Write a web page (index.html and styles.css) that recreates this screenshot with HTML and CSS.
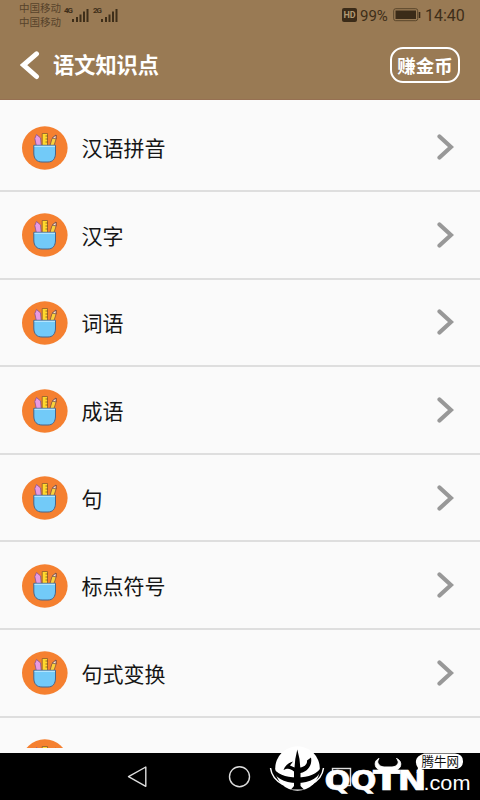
FILE: index.html
```html
<!DOCTYPE html>
<html lang="zh-CN">
<head>
<meta charset="utf-8">
<title>语文知识点</title>
<link rel="stylesheet" href="styles.css">
</head>
<body>
<svg width="0" height="0" class="defs">
  <symbol id="pencils" viewBox="0 0 46 44">
    <ellipse cx="22.8" cy="22" rx="22.8" ry="21.7" fill="#f58030"/>
    <path d="M15 23 12.800 12.500 14.500 8.500 18.600 12 19.500 23Z" fill="#e99be0" stroke="#80539a" stroke-width=".8"/>
    <path d="M27 23 30 12.500 34 9 34 13.500 30.800 23Z" fill="#fbd23c" stroke="#805044" stroke-width=".8"/>
    <path d="M30.300 12 34 9V13Z" fill="#ffe3d3" stroke="#603c43" stroke-width=".7"/>
    <path d="M20.200 7.500H25.500V23H20.200Z" fill="#ffd82d" stroke="#8c5930" stroke-width=".8"/>
    <path d="M23.500 10H26M23.500 13H26M23.500 16H26" stroke="#805020" stroke-width=".8"/>
    <path d="M11.800 19.300H33.500V27C33.500 33 30.500 36 26 36H20C15 36 11.800 33 11.800 27Z" fill="#72caf8" stroke="#46658c"/>
    <path d="M12.500 20.300H33" stroke="#b9e8ff" stroke-width="1.200"/>
  </symbol>
  <symbol id="next" viewBox="0 0 18 28">
    <path d="M3.500 3.500 15 14 3.500 24.500" fill="none" stroke="#989898" stroke-width="4.200" stroke-linecap="round"/>
  </symbol>
  <symbol id="signal" viewBox="0 0 17 15">
    <path d="M1 14V11M5 14V9M8.500 14V6.500M12 14V3.500M15.500 14V1" stroke="#3e2e19" stroke-width="2"/>
  </symbol>
</svg>
<div class="screen">
  <header class="header">
    <div class="status">
      <div class="carriers"><span>中国移动</span><span>中国移动</span></div>
      <span class="net">4G</span><svg class="signal"><use href="#signal"/></svg>
      <span class="net second">2G</span><svg class="signal"><use href="#signal"/></svg>
      <span class="hd">HD</span>
      <span class="percent">99%</span>
      <svg class="battery" width="28" height="14" viewBox="0 0 28 14"><rect x=".7" y=".7" width="24" height="12" rx="2" fill="none" stroke="#59452a"/><rect x="2.5" y="2.5" width="20.5" height="8.5" fill="#3b2b18"/><path d="M26.500 4V10" stroke="#3b2b18" stroke-width="1.600"/></svg>
      <span class="time">14:40</span>
    </div>
    <div class="titlebar">
      <svg class="back" width="20" height="30" viewBox="0 0 20 30"><path d="M16.500 3.800 3.500 15 16.500 26.500" fill="none" stroke="#fff" stroke-width="5" stroke-linecap="round"/></svg>
      <h1>语文知识点</h1>
      <button class="coins">赚金币</button>
    </div>
  </header>
  <main class="list">
    <div class="row"><svg class="icon"><use href="#pencils"/></svg><span>汉语拼音</span><svg class="next"><use href="#next"/></svg></div>
    <div class="row"><svg class="icon"><use href="#pencils"/></svg><span>汉字</span><svg class="next"><use href="#next"/></svg></div>
    <div class="row"><svg class="icon"><use href="#pencils"/></svg><span>词语</span><svg class="next"><use href="#next"/></svg></div>
    <div class="row"><svg class="icon"><use href="#pencils"/></svg><span>成语</span><svg class="next"><use href="#next"/></svg></div>
    <div class="row"><svg class="icon"><use href="#pencils"/></svg><span>句</span><svg class="next"><use href="#next"/></svg></div>
    <div class="row"><svg class="icon"><use href="#pencils"/></svg><span>标点符号</span><svg class="next"><use href="#next"/></svg></div>
    <div class="row"><svg class="icon"><use href="#pencils"/></svg><span>句式变换</span><svg class="next"><use href="#next"/></svg></div>
    <div class="row"><svg class="icon"><use href="#pencils"/></svg></div>
  </main>
  <nav class="nav">
    <svg width="480" height="47" viewBox="0 0 480 47" fill="none" stroke="#dedede" stroke-width="1.4">
      <path d="M145.800 14V33.300L128.500 23.700Z" stroke-linejoin="round"/>
      <circle cx="239.5" cy="23.7" r="10"/>
      <rect x="332.5" y="15.5" width="18" height="17"/>
    </svg>
  </nav>
  <svg class="watermark" width="220" height="60" viewBox="260 740 220 60">
    <circle cx="297.5" cy="768.5" r="22.3" fill="#fff"/>
    <path d="M271.500 766C277 774 285 777.500 297 777.500S317 774 322.500 766C320 778 310 783 297 783S274 778 271.500 766Z" fill="#000"/>
    <path d="M270.500 768C271.500 776 276 781 283 784.500M323.500 768C322.500 776 318 781 311 784.500" fill="none" stroke="#fff" stroke-width="1.500"/>
    <path d="M297.300 749.500 299.500 759 300.300 767.500C304.500 767 307.500 764 307 760.500L311 757.500C312.500 765 308 771.500 300.500 773V786L304 789.500H291L294 786V771.500C290 768.500 288 768 283.500 770C285 765.500 289 762.500 293 761.500L290 765.500 294.500 767.500 295.300 759Z" fill="#000"/>
    <path d="M379 758.500C376 762 378.500 766.500 384 767H392C398 766.500 400 762 396.500 758.500C402 760.500 402 767 397.500 769.500Q395 771.500 391 771.500H385Q381 771.500 378.500 769.500C374 767 374 760.500 379 758.500Z" fill="#fff" stroke="#fff"/>
    <text class="brand" y="790.3"><tspan x="324.5" textLength="52" lengthAdjust="spacingAndGlyphs">QQ</tspan><tspan x="373" textLength="27" lengthAdjust="spacingAndGlyphs">T</tspan><tspan x="397.5" textLength="29" lengthAdjust="spacingAndGlyphs">N</tspan></text>
    <text class="domain" x="423.5" y="790" textLength="47" lengthAdjust="spacingAndGlyphs">.com</text>
    <path d="M424 753.500H455Q463 754 463 761.300T455 769H423L416.500 773 418 768Q415.500 765 416 760.500T424 753.500Z" fill="#fff"/>
    <text class="tag" x="421.5" y="766.3" textLength="37.5" lengthAdjust="spacingAndGlyphs">腾牛网</text>
  </svg>
</div>
</body>
</html>
```
FILE: styles.css
```css
* { box-sizing: border-box; }
body { margin: 0; font-family: Roboto, "Noto Sans CJK SC", sans-serif; }
.defs { position: absolute; }
.screen { position: relative; width: 480px; height: 800px; overflow: hidden; background: #fafafa; display: flex; flex-direction: column; }
.header { height: 100px; flex: none; background: #997a54; border-bottom: 1px solid #967052; }
.status { height: 30px; display: flex; align-items: flex-start; padding-left: 19px; color: #3e2e19; }
.carriers { width: 45px; display: flex; flex-direction: column; padding-top: 2px; font-size: 10.5px; line-height: 13.5px; color: #57432b; white-space: nowrap; }
.net { width: 8px; margin-top: 6px; font-size: 8px; line-height: 10px; font-weight: 700; letter-spacing: -1px; }
.second { margin-left: 4px; }
.signal { width: 17px; height: 15px; margin-top: 7.5px; }
.hd { width: 15px; height: 14px; margin: 8px 3px 0 auto; border-radius: 2px; background: #3b2b18; color: #b39a73; font-size: 9px; line-height: 14px; font-weight: 700; text-align: center; }
.percent, .time { font-size: 15px; line-height: 18px; margin-top: 7px; }
.percent { width: 30px; }
.battery { margin: 8px 4px 0 3px; }
.time { width: 55px; font-size: 16px; }
.titlebar { height: 71px; display: flex; align-items: center; padding: 0 20px 0 20px; }
.back { margin-top: -1px; }
h1 { margin: 1px auto 0 13px; color: #fff; font-size: 21.2px; line-height: 32px; font-weight: 700; }
.coins { width: 70px; height: 36px; padding: 0 0 1px; border: 2px solid #fff; border-radius: 13px; background: none; color: #fff; font: 700 18.5px Roboto, "Noto Sans CJK SC", sans-serif; white-space: nowrap; margin-top: -1px; }
.list { height: 648px; overflow: hidden; padding-top: 4.5px; }
.row { height: 87.6px; display: flex; align-items: center; padding: 0 26px 0 22px; border-bottom: 2px solid #dedede; color: #151515; font-size: 21px; }
.icon { width: 46px; height: 44px; margin-right: 13.5px; margin-top: 1px; }
.next { width: 18px; height: 28px; margin-left: auto; }
.nav { height: 47px; margin-top: auto; background: #000; }
.nav svg { display: block; }
.watermark { position: absolute; right: 0; bottom: 0; }
.brand { font: 700 26px "DejaVu Sans", sans-serif; fill: #fff; stroke: #fff; stroke-width: .6; }
.domain { font: 20px "Liberation Sans", sans-serif; fill: #fff; }
.tag { font: 13px "Noto Sans CJK SC", sans-serif; fill: #111; }
```
